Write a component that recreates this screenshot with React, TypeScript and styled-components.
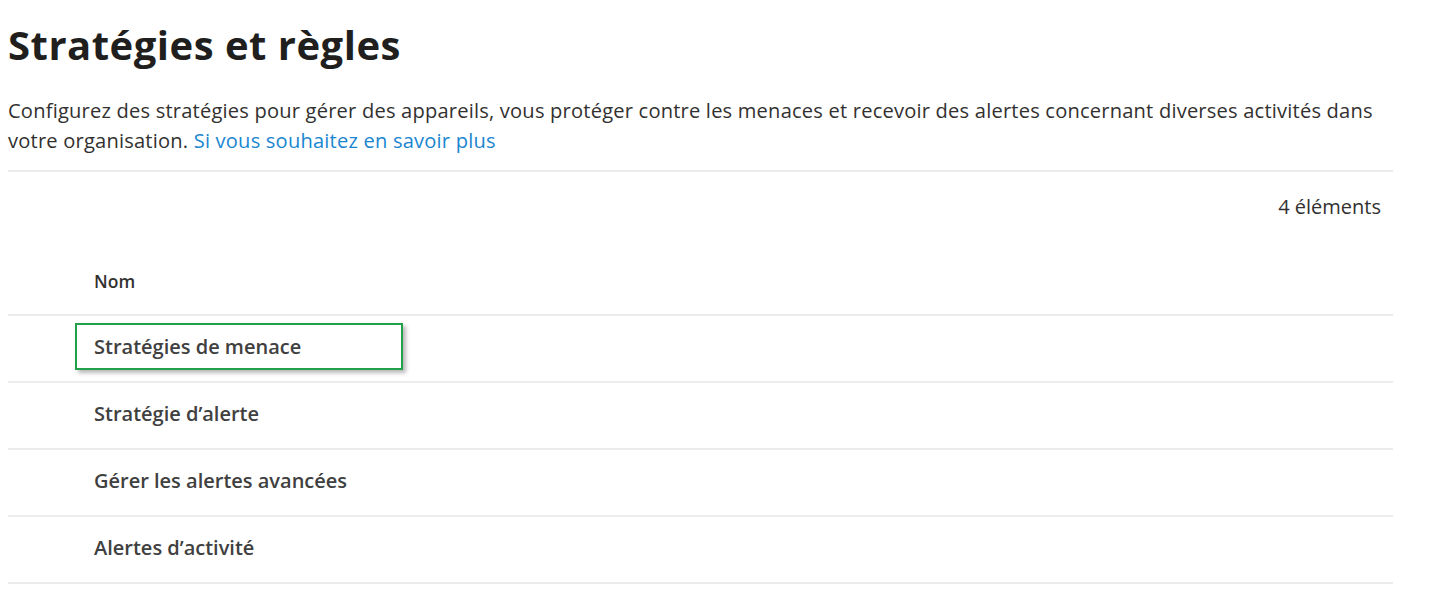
import React from "react";
import styled, { createGlobalStyle } from "styled-components";

const Global = createGlobalStyle`
  html, body { margin: 0; padding: 0; background: #ffffff; }
  body { font-family: "Open Sans", "Noto Sans", sans-serif; color: #323130; }
`;

const Page = styled.main`
  width: 1385px;
  padding: 20px 0 0 8px;
`;

const Title = styled.h1`
  margin: 0;
  font-size: 40px;
  line-height: 50px;
  font-weight: 700;
  color: #201f1e;
  letter-spacing: 0.5px;
`;

const Description = styled.p`
  margin: 26px 0 0;
  font-size: 20.1px;
  line-height: 30px;
  letter-spacing: 0.2px;
  color: #323130;
`;

const Link = styled.a`
  color: #1a86d0;
  text-decoration: none;
`;

const Divider = styled.hr`
  margin: 14px 0 0;
  border: 0;
  height: 2px;
  background: #ececec;
`;

const Count = styled.div`
  display: flex;
  justify-content: flex-end;
  padding: 22px 12px 0 0;
  font-size: 20px;
  line-height: 26px;
  color: #323130;
`;

const Table = styled.div`
  margin-top: 48px;
  display: flex;
  flex-direction: column;
`;

const HeaderRow = styled.div`
  display: flex;
  align-items: center;
  line-height: 26px;
  padding: 0 0 20px 86px;
  border-bottom: 2px solid #ececec;
  font-size: 17.5px;
  font-weight: 600;
  color: #323130;
`;

const Row = styled.div`
  display: flex;
  align-items: flex-start;
  box-sizing: border-box;
  height: 67px;
  padding: 7px 0 0 67px;
  border-bottom: 2px solid #ececec;
`;

const Cell = styled.span<{ $highlight?: boolean }>`
  display: flex;
  align-items: center;
  height: 47px;
  width: ${(p) => (p.$highlight ? "328px" : "auto")};
  box-sizing: border-box;
  padding-left: 17px;
  font-size: 20px;
  font-weight: 600;
  color: #404040;
  border: 2px solid ${(p) => (p.$highlight ? "#22a04a" : "transparent")};
  box-shadow: ${(p) => (p.$highlight ? "3px 3px 4px rgba(0,0,0,0.28)" : "none")};
`;

const rows = [
  "Stratégies de menace",
  "Stratégie d’alerte",
  "Gérer les alertes avancées",
  "Alertes d’activité",
];

export default function App() {
  return (
    <>
      <Global />
      <Page>
        <Title>Stratégies et règles</Title>
        <Description>
          Configurez des stratégies pour gérer des appareils, vous protéger contre les menaces et recevoir des alertes concernant diverses activités dans votre organisation.{" "}
          <Link href="#">Si vous souhaitez en savoir plus</Link>
        </Description>
        <Divider />
        <Count>4 éléments</Count>
        <Table>
          <HeaderRow>Nom</HeaderRow>
          {rows.map((r, i) => (
            <Row key={r}>
              <Cell $highlight={i === 0}>{r}</Cell>
            </Row>
          ))}
        </Table>
      </Page>
    </>
  );
}
